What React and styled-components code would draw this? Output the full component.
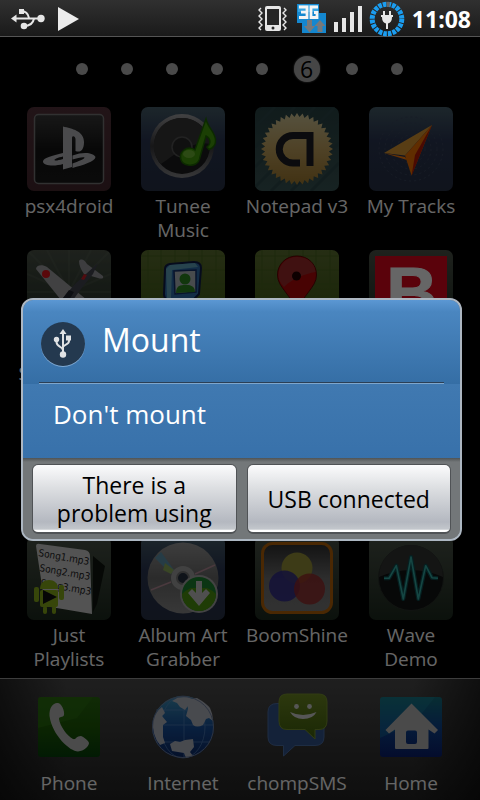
import React from "react";
import styled, {createGlobalStyle} from "styled-components";

const GlobalStyle = createGlobalStyle`
  * {
    box-sizing: border-box;
  }

  body {
    margin: 0;
    background: #000;
    font-family: "Open Sans", "Noto Sans", sans-serif;
  }
`;

/* ---------- status bar icons ---------- */

function UsbStatusIcon() {
  return (
    <svg width="34" height="24" viewBox="0 0 34 24" aria-label="USB connected">
      <g fill="none" stroke="#e6e6e6" strokeWidth="2">
        <path d="M3 11.500H30" />
        <path d="M10 4C14 4 17 6 18 11" />
        <path d="M13 19C19 19 22 17 23 11.500" />
      </g>
      <g fill="#e6e6e6">
        <path d="M0 11.500l5.500-4v8z" />
        <rect x="8" y="2" width="5" height="5" />
        <circle cx="13" cy="19" r="3.300" />
        <circle cx="30" cy="11.500" r="3.700" />
      </g>
    </svg>
  );
}

function PlayIcon() {
  return (
    <svg width="22" height="26" viewBox="0 0 22 26" aria-label="Playing">
      <path d="M0 1v24l21-12z" fill="#ececec" />
    </svg>
  );
}

function VibrateIcon() {
  return (
    <svg width="32" height="28" viewBox="0 0 32 28" aria-label="Vibrate">
      <rect x="7" y="1" width="16" height="25" rx="2" fill="#e6e6e6" />
      <rect x="9" y="4" width="12" height="16" fill="#262626" />
      <circle cx="15" cy="23" r="1.500" fill="#262626" />
      <g fill="none" stroke="#e6e6e6" strokeWidth="1.400">
        <path d="M3 3l-2 2 3 3-3 3 3 3-3 3 3 3-3 3 2 2" />
        <path d="M26 3l2 2-3 3 3 3-3 3 3 3-3 3 3 3-2 2" />
      </g>
    </svg>
  );
}

function ThreeGIcon() {
  return (
    <svg width="30" height="30" viewBox="0 0 30 30" aria-label="3G">
      <path d="M0 0h22v9h7v20H5v-10H0z" fill="#1487cf" />
      <path d="M1 1h20v7H1z" fill="#36a4e2" />
      <path
        d="M2 3h8v10.500H2M4 8.200h5M21 3h-7v10.500H20v-5H17"
        fill="none"
        stroke="#f4f4f4"
        strokeWidth="2.800"
      />
      <path d="M10 16h5v6h3l-5.500 6.500L7 22h3z" fill="#77797b" />
      <path d="M20.500 28h5v-6h3L23 16l-5.500 6h3z" fill="#77797b" />
    </svg>
  );
}

function SignalIcon() {
  return (
    <svg width="28" height="28" viewBox="0 0 28 28" aria-label="Signal full">
      <g fill="#e6e6e6">
        <rect x="0" y="17" width="4" height="10" />
        <rect x="8" y="13" width="4" height="14" />
        <rect x="16" y="7" width="4" height="20" />
        <rect x="24" y="1" width="4" height="26" />
      </g>
    </svg>
  );
}

function BatteryIcon() {
  return (
    <svg width="36" height="36" viewBox="0 0 36 36" aria-label="Charging">
      <circle
        cx="18"
        cy="18"
        r="14.800"
        fill="none"
        stroke="#1b9df0"
        strokeWidth="5"
        strokeDasharray="3.650 1"
      />
      <path d="M17.500 1h3.500l-.500 5h-2.500z" fill="#666" />
      <g fill="#e8e8e8">
        <rect x="14" y="10" width="2" height="5" />
        <rect x="20" y="10" width="2" height="5" />
        <path d="M12 14h12v2h-1c0 4-1.500 6-4 6.500V28h-2v-5.500c-2.500-.500-4-2.500-4-6.500H12z" />
      </g>
    </svg>
  );
}

/* ---------- app icons ---------- */

function PsxArt() {
  return (
    <>
      <rect x="7.500" y="7.500" width="69" height="69" rx="4" fill="url(#panel)" stroke="#7a7a7a" strokeWidth="1.500" />
      <path
        d="M36 46C25 49 16 51 16 54.500C16 59 28 59.500 36 57V52C31 53.500 28 54 27.500 53C27.500 52 31 50.500 36 49.500zM45.500 48.500C57 44 67 46 68.500 50C68 54.500 56 58 45.500 61V56.500C51 54.500 58 52 57.500 50.500C56 49.500 50 51.500 45.500 52.500z"
        fill="#b9babf"
      />
      <path
        d="M36 19.500C45 21.500 57 24 57 35C57 43 53.500 46 48.500 44V32C48.500 29 45 28 45 31V60L36 62.500z"
        fill="#b9babf"
      />
    </>
  );
}

function TuneeArt() {
  return (
    <>
      <circle cx="41" cy="39" r="32" fill="url(#metal)" />
      <circle cx="41" cy="39" r="28" fill="#1c1c1e" />
      <path d="M13 36C15 20 27 11 41 11s26 10 28 26C52 32 30 50 20 57C15 52 12 44 13 36z" fill="#383838" />
      <circle cx="41" cy="40" r="10" fill="#2a2a2a" stroke="#555" strokeWidth="1.500" />
      <path
        d="M65 12C67 21 74 25 74.500 33C75 38 72 41 68 42.500L66 40C71 36 69 31 65 29L59 50C58 57 52 59 47 58C39 57 37 48 43 43C47 40 52 41 54 43z"
        fill="#459d0c"
        stroke="#1f6a00"
        strokeWidth="1.500"
      />
      <ellipse cx="48" cy="47" rx="6" ry="4" fill="#6fb834" />
    </>
  );
}

const gearPoints = Array.from({length: 80}, (_, i) => {
  const radius = i % 2 ? 32 : 36;
  const angle = (i * Math.PI) / 40;
  return `${(42 + radius * Math.cos(angle)).toFixed(1)},${(42 + radius * Math.sin(angle)).toFixed(1)}`;
}).join(" ");

function NotepadArt() {
  return (
    <>
      <path d="M0 20L20 0M0 40L40 0M0 60L60 0M0 80L80 0M16 84L84 16M36 84L84 36M56 84L84 56" stroke="#2e4a4c" strokeWidth="3" />
      <polygon points={gearPoints} fill="url(#gold)" />
      <path d="M55 59V28.500H38a13.700 13.700 0 0 0 0 27.500h7" fill="none" stroke="#1c1d24" strokeWidth="7" />
    </>
  );
}

function TracksArt() {
  return (
    <>
      <g fill="none" stroke="#3c4860" strokeWidth="1" strokeDasharray="2 3">
        <circle cx="42" cy="42" r="14" />
        <circle cx="42" cy="42" r="20" />
        <circle cx="42" cy="42" r="26" />
        <circle cx="42" cy="42" r="32" />
      </g>
      <path d="M63 18L15 46l21 2.500z" fill="#dd9a34" />
      <path d="M15 46l21 4 2 3z" fill="#ff7d0a" />
      <path d="M63 18L36 48.500l6.500 20z" fill="#f07000" />
      <path d="M63 18L46 48l-3.500 21z" fill="#b81a06" />
    </>
  );
}

function PlaneArt() {
  return (
    <>
      <g stroke="#6b7567" strokeWidth="2" opacity=".2">
        <path d="M42 42L0 0M42 42L20 0M42 42V0M42 42L64 0M42 42L84 0M42 42L84 24M42 42L0 24M42 42H84M42 42H0" />
      </g>
      <path d="M9 19C9 15 15 14 20 17L60 50H34z" fill="#a2a2a6" />
      <path d="M52 11C54 8 58 10 60 14L76 26C77 29 74 29 71 28L57 24C54 20 52 15 52 11z" fill="#9a9a9f" />
      <path d="M36 48L48 34L71 13L66 24L54 39L46 50z" fill="#444752" />
      <path d="M36 48L42 40L47 42L42 50z" fill="#20242e" />
      <circle cx="19" cy="24" r="4" fill="#e0141c" />
      <path d="M57 24l3 1-3 5-3-1z" fill="#c9202a" />
    </>
  );
}

function GridLines() {
  return (
    <path
      d="M7 0V84M20 0V84M34 0V84M48 0V84M61 0V84M75 0V84M0 6H84M0 20H84M0 34H84M0 48H84"
      stroke="#4a6620"
      strokeWidth="1"
    />
  );
}

function ContactArt() {
  return (
    <>
      <GridLines />
      <path
        d="M24 19Q24 15 29 14L53 12Q60 12 60 18L58 44L52 50H26Q23 48 23 44z"
        fill="#2f6fae"
        stroke="#101c48"
        strokeWidth="2"
      />
      <path d="M25 19L29 15L54 13L57 17L31 20L30 48H26z" fill="#62a8c0" />
      <path d="M33 21L55 20V42L34 44z" fill="#b4bcc0" stroke="#16316c" strokeWidth="1.500" />
      <circle cx="44" cy="29" r="5.500" fill="#2d8a22" />
      <path d="M35 43C35 35 40 35 44 35s10 0 10 7z" fill="#2d8a22" />
    </>
  );
}

function PinArt() {
  return (
    <>
      <GridLines />
      <path d="M42 6C53 6 61.500 14 61.500 25C61.500 38 47 44 42 64C37 44 22.500 38 22.500 25C22.500 14 31 6 42 6z" fill="#b40808" stroke="#5c0505" />
      <path d="M42 7C52 7 60 13 60.500 22C50 24 38 28 29 37C25 33 23.500 29 23.500 25C23.500 15 31 7 42 7z" fill="#a02c2c" />
      <circle cx="41.500" cy="26" r="4.500" fill="#200" />
    </>
  );
}

function BArt() {
  return (
    <>
      <rect x="6" y="6" width="72" height="72" fill="#e0061c" />
      <BigLetter x="43" y="67" textAnchor="middle">
        B
      </BigLetter>
    </>
  );
}

function PlaylistArt() {
  return (
    <>
      <path d="M66 20L78 30L70 68L66 76z" fill="#0f160f" />
      <path d="M9 10Q9 7 13 8L58 14Q63 15 63 20L65 78L18 70z" fill="#cfcfcf" />
      <SongText x="11" y="20" transform="rotate(10 11 20)">
        Song1.mp3
      </SongText>
      <SongText x="12" y="35" transform="rotate(10 12 35)">
        Song2.mp3
      </SongText>
      <SongText x="13" y="50" transform="rotate(10 13 50)">
        Song3.mp3
      </SongText>
      <g fill="#8bae1a">
        <path d="M13 53C13 47 17 44 22 44s9 3 9 9z" />
        <rect x="13" y="54" width="18" height="17" rx="2" />
        <rect x="7" y="51" width="5" height="15" rx="2" />
        <rect x="32" y="49" width="5" height="15" rx="2" />
        <rect x="16" y="70" width="4" height="8" rx="2" />
        <rect x="25" y="70" width="4" height="8" rx="2" />
      </g>
      <path d="M16 54v14l14-7z" fill="#111" />
    </>
  );
}

function AlbumArt() {
  return (
    <>
      <circle cx="42" cy="42" r="35.500" fill="url(#disc)" />
      <path d="M14 22L20 16L33 34L30 38z" fill="#5f97b0" />
      <path d="M24 27L33 34L30 38L22 34z" fill="#8fae5c" />
      <path d="M10 54L30 46M54 38L74 29" stroke="#b98f9b" strokeWidth="1.500" />
      <circle cx="42" cy="42" r="12" fill="#a3a3a3" />
      <circle cx="42" cy="42" r="6" fill="#26303f" stroke="#777" strokeWidth="2" />
      <circle cx="58" cy="58" r="19" fill="#a8a8a8" />
      <circle cx="58" cy="58" r="17" fill="#1d8531" />
      <path d="M41 58a17 17 0 0 0 34 0q-4-4-9-6H50q-5 2-9 6z" fill="#4f970f" />
      <path d="M55 45h6v12l4-4 4 4-11 13-11-13 4-4 4 4z" fill="#c6c6c6" />
    </>
  );
}

function BoomArt() {
  return (
    <>
      <rect x="7.500" y="7.500" width="69" height="69" rx="10" fill="url(#boom)" stroke="#b86408" strokeWidth="3" />
      <circle cx="42" cy="32" r="15.500" fill="#98933a" />
      <circle cx="29.500" cy="50" r="15.500" fill="#302a8c" fillOpacity=".85" />
      <circle cx="54.500" cy="53" r="15.500" fill="#982828" fillOpacity=".8" />
    </>
  );
}

function WaveArt() {
  return (
    <>
      <circle cx="42" cy="42" r="32.500" fill="#131414" stroke="#2b322c" />
      <path d="M10 41a32 32 0 0 1 64 0q-32-14-64 0z" fill="#333534" />
      <path
        d="M15 42.300H20L27.300 29.700L34.300 63L42 21L49.300 63L56.700 29.700L63 41.700L69 42.300"
        fill="none"
        stroke="#0e4f52"
        strokeWidth="4"
        strokeLinejoin="round"
      />
      <path
        d="M15 42.300H20L27.300 29.700L34.300 63L42 21L49.300 63L56.700 29.700L63 41.700L69 42.300"
        fill="none"
        stroke="#35b0a8"
        strokeWidth="1.600"
        strokeLinejoin="round"
      />
    </>
  );
}

/* ---------- dock icons ---------- */

function PhoneArt() {
  return (
    <>
      <rect x="1" y="3" width="62" height="60" rx="3" fill="url(#phone)" />
      <path d="M1 6Q1 3 4 3H56L40 24L1 34z" fill="#2f7a12" fillOpacity=".5" />
      <path
        d="M20 9C24 8 28 17 27 21C26 24 22 22 22 25C23 32 30 42 36 45C39 46 39 42 44 42C47 43 52 47 52 49C52 52 47 57 41 57.500C33 57.500 15 41 12.500 22C12 14 16 9 20 9z"
        fill="#bcbcbc"
      />
    </>
  );
}

function GlobeArt() {
  return (
    <>
      <circle cx="32" cy="33" r="31" fill="url(#globe)" />
      <g fill="none" stroke="#5f8cc4" strokeWidth="1" opacity=".6">
        <path d="M33 2V64M1 31H63M5 48H59M5 16H59" />
        <ellipse cx="32" cy="33" rx="22" ry="31" />
      </g>
      <g fill="#b4b8c4">
        <path d="M36 8L40 5L46 4Q55 9 59 14Q62 20 62 27L58 24L55 25L52 31Q46 34 42 31L40 26L35 22L37 15z" />
        <path d="M21 7L27 3.500L36 3L44 6L41 9L41 13L37 12L34 16L29 13L26 9z" />
        <path d="M2 26Q5 17 11 13L14 19L11 22L16 28L12 31L12 43L14 49L9 51Q1 42 2 26z" />
        <path d="M19 50L24 47L29 48L34 46L42 45L43 53L39 58L42 62L35 64L33 59L21 57z" />
      </g>
      <circle cx="32" cy="33" r="30.500" fill="none" stroke="#7080a0" strokeWidth="1" />
    </>
  );
}

function ChompArt() {
  return (
    <>
      <path
        d="M12 9.500H50Q59 9.500 59 18V43Q59 51.500 50 51.500H30L18.500 62V51.500H12Q3 51.500 3 43V18Q3 9.500 12 9.500z"
        fill="#34558f"
        stroke="#4d70a8"
      />
      <path
        d="M22 0H54Q62 0 62 8V27Q62 35.500 54 35.500H50V45L40 35.500H22Q14 35.500 14 27V8Q14 0 22 0z"
        fill="url(#chomp)"
        stroke="#7a9630"
      />
      <circle cx="31.500" cy="12.500" r="2.400" fill="#d8d8d8" />
      <circle cx="44.500" cy="12.500" r="2.400" fill="#d8d8d8" />
      <path d="M25 18Q38 24 51.500 18Q48 25 38 25Q29 25 25 18z" fill="#d8d8d8" />
    </>
  );
}

function HomeArt() {
  return (
    <>
      <rect x="1" y="3" width="62" height="60" rx="3" fill="url(#home)" />
      <path d="M1 6Q1 3 4 3H56L36 28L1 44z" fill="#2295a8" fillOpacity=".3" />
      <path
        fillRule="evenodd"
        d="M32.500 9.500L59 36L55.500 39.500L49.500 35.500V54Q49.500 55 48.500 55H17Q16 55 16 54V35.500L10 39.500L6.500 36zM29 36.500Q27 36.500 27 38.500V48Q27 50 29 50H36Q38 50 38 48V38.500Q38 36.500 36 36.500z"
        fill="#b8b8b8"
      />
    </>
  );
}

function Gradient({id, stops}) {
  return (
    <linearGradient id={id} x1="0" y1="0" x2="0" y2="1">
      {stops.map((color, i) => (
        <stop key={color} offset={i / (stops.length - 1)} stopColor={color} />
      ))}
    </linearGradient>
  );
}

function SharedGradients() {
  return (
    <Defs width="0" height="0" aria-hidden="true">
      <defs>
        <Gradient id="panel" stops={["#3c3c3c", "#151515", "#1a1a1a"]} />
        <Gradient id="metal" stops={["#a5a5a8", "#3a3a3d", "#8a8a8d"]} />
        <Gradient id="gold" stops={["#d6cb9c", "#c5a560", "#a37c30"]} />
        <Gradient id="disc" stops={["#9a9a9a", "#6c6c6c", "#8c8c8c"]} />
        <Gradient id="boom" stops={["#303030", "#707070", "#7d7d7d"]} />
        <Gradient id="phone" stops={["#2a6b10", "#1d5c06", "#06430a"]} />
        <Gradient id="globe" stops={["#3f95bb", "#17509c", "#0d2a68"]} />
        <Gradient id="chomp" stops={["#708c24", "#43640c"]} />
        <Gradient id="home" stops={["#14717e", "#0d4591", "#0c2070"]} />
      </defs>
    </Defs>
  );
}

/* ---------- data ---------- */

const maroon = "#55343c, #47282f";
const navy = "#48606c, #2c3855 40%, #283248";
const teal = "#2a4546, #3a5656";
const forest = "#4c554a, #1e2c20";
const grass = "#5f7332, #38560c";

const apps = [
  {id: "psx", name: "psx4droid", Art: PsxArt, tile: maroon},
  {id: "tunee", name: "Tunee Music", Art: TuneeArt, tile: navy},
  {id: "notepad", name: "Notepad v3", Art: NotepadArt, tile: teal},
  {id: "tracks", name: "My Tracks", Art: TracksArt, tile: navy},
  {id: "plane", name: "Air Shootdown", Art: PlaneArt, tile: forest},
  {id: "contacts", Art: ContactArt, tile: grass},
  {id: "places", Art: PinArt, tile: grass},
  {id: "b", Art: BArt, tile: forest},
  {id: "playlists", name: "Just Playlists", Art: PlaylistArt, tile: forest, row: 4},
  {id: "album", name: "Album Art Grabber", Art: AlbumArt, tile: navy, row: 4},
  {id: "boom", name: "BoomShine", Art: BoomArt, tile: forest, row: 4},
  {id: "wave", name: "Wave Demo", Art: WaveArt, tile: forest, row: 4},
];

const dock = [
  {name: "Phone", Art: PhoneArt},
  {name: "Internet", Art: GlobeArt},
  {name: "chompSMS", Art: ChompArt},
  {name: "Home", Art: HomeArt},
];

const pages = [1, 2, 3, 4, 5, 6, 7, 8];
const currentPage = 6;

function App() {
  return (
    <Screen>
      <GlobalStyle />
      <SharedGradients />
      <StatusBar>
        <Notifications>
          <UsbStatusIcon />
          <PlayIcon />
        </Notifications>
        <SystemIcons>
          <VibrateIcon />
          <ThreeGIcon />
          <SignalIcon />
          <BatteryIcon />
          <Clock>11:08</Clock>
        </SystemIcons>
      </StatusBar>

      <Launcher>
        <Pager>
          {pages.map((page) => (
            <PageSlot key={page}>
              {page === currentPage ? <PageNumber>{page}</PageNumber> : <Dot />}
            </PageSlot>
          ))}
        </Pager>
        <AppGrid>
          {apps.map(({id, name, Art, tile, row}) => (
            <AppLink href="#" key={id} aria-label={name || id} $row={row}>
              <Tile $colors={tile}>
                <svg width="84" height="84" viewBox="0 0 84 84" aria-hidden="true">
                  <Art />
                </svg>
              </Tile>
              {name && <AppName>{name}</AppName>}
            </AppLink>
          ))}
        </AppGrid>
        <Dock>
          {dock.map(({name, Art}) => (
            <DockLink href="#" key={name}>
              <DockSvg width="64" height="64" viewBox="0 0 64 64" aria-hidden="true">
                <Art />
              </DockSvg>
              <AppName>{name}</AppName>
            </DockLink>
          ))}
        </Dock>

        <Scrim>
          <Dialog role="dialog" aria-labelledby="dialog-title">
            <DialogHeader>
              <UsbBadge>
                <svg width="20" height="30" viewBox="0 0 20 30" aria-hidden="true">
                  <g fill="none" stroke="#e0e2e4" strokeWidth="2">
                    <path d="M10 4V25" />
                    <path d="M3.500 10V13C3.500 18 9 17 10 21M16 8V12C16 16 11 15 10 18" />
                  </g>
                  <g fill="#e0e2e4">
                    <path d="M10 0l3.500 5h-7z" />
                    <circle cx="3.500" cy="10.500" r="2.700" />
                    <rect x="13" y="6.500" width="5" height="5" />
                    <circle cx="10" cy="25.500" r="3.200" />
                  </g>
                </svg>
              </UsbBadge>
              <Title id="dialog-title">Mount</Title>
            </DialogHeader>
            <Divider />
            <ListItem type="button">Don't mount</ListItem>
            <DialogFooter>
              <DialogButton type="button">There is a problem using</DialogButton>
              <DialogButton type="button">USB connected</DialogButton>
            </DialogFooter>
          </Dialog>
        </Scrim>
      </Launcher>
    </Screen>
  );
}

export default App;

const Screen = styled.div`
  min-height: 100vh;
  display: flex;
  flex-direction: column;
  background: #000;
`;

const Defs = styled.svg`
  position: absolute;
`;

const StatusBar = styled.header`
  height: 37px;
  display: flex;
  justify-content: space-between;
  align-items: center;
  padding: 2px 9px 0 11px;
  background: linear-gradient(#303030, #1a1a1a);
  border-bottom: 1px solid #555;
`;

const Notifications = styled.div`
  display: flex;
  align-items: center;
  gap: 13px;
`;

const SystemIcons = styled.div`
  display: flex;
  align-items: center;
  gap: 7px;
`;

const Clock = styled.time`
  color: #fff;
  font-size: 23px;
  line-height: 32px;
  font-weight: 700;
`;

const Launcher = styled.main`
  position: relative;
  flex: 1;
  display: flex;
  flex-direction: column;
`;

const Pager = styled.div`
  height: 70px;
  padding: 0 2px 6px 0;
  display: flex;
  justify-content: center;
  align-items: center;
`;

const PageSlot = styled.div`
  width: 45px;
  display: flex;
  justify-content: center;
`;

const Dot = styled.span`
  width: 12px;
  height: 12px;
  border-radius: 50%;
  background: #b8b8b8;
`;

const PageNumber = styled.span`
  width: 26px;
  height: 26px;
  border-radius: 50%;
  background: #b0b0b0;
  box-shadow: 0 0 2px #999;
  color: #000;
  font-size: 23px;
  line-height: 26px;
  text-align: center;
`;

const AppGrid = styled.div`
  display: grid;
  grid-template-columns: repeat(4, minmax(0, 1fr));
  grid-template-rows: repeat(4, 135px);
  row-gap: 8px;
  padding: 0 12px;
`;

const AppLink = styled.a`
  grid-row: ${(props) => props.$row || "auto"};
  display: flex;
  flex-direction: column;
  align-items: center;
  gap: 3px;
  color: #fff;
  text-decoration: none;
`;

const Tile = styled.span`
  width: 84px;
  height: 84px;
  border-radius: 7px;
  overflow: hidden;
  background: linear-gradient(${(props) => props.$colors});

  svg {
    display: block;
  }
`;

const AppName = styled.span`
  max-width: 105px;
  font-size: 19px;
  line-height: 24px;
  text-align: center;
`;

const Dock = styled.nav`
  margin-top: auto;
  height: 122px;
  display: grid;
  grid-template-columns: repeat(4, minmax(0, 1fr));
  padding: 15px 12px 0;
  border-top: 1px solid #999;
  background: linear-gradient(90deg, rgba(0, 0, 0, 0.5), transparent 14%, transparent 86%, rgba(0, 0, 0, 0.5)),
    linear-gradient(#4e4e4e, #242424);
`;

const DockLink = styled(AppLink)`
  gap: 13px;
`;

const DockSvg = styled.svg`
  overflow: visible;
`;

const BigLetter = styled.text`
  font: 700 71px "Liberation Sans", sans-serif;
  fill: #fff;
  stroke: #fff;
  stroke-width: 1px;
`;

const SongText = styled.text`
  font: 10px "DejaVu Sans Condensed", "DejaVu Sans", sans-serif;
  fill: #222;
`;

const Scrim = styled.div`
  position: absolute;
  inset: 0;
  display: flex;
  align-items: center;
  padding: 2px 18px 0 21px;
  background: rgba(0, 0, 0, 0.6);
`;

const Dialog = styled.section`
  flex: 1;
  border: 2px solid #adb7c2;
  border-radius: 12px;
  overflow: hidden;
  background: #737779;
`;

const DialogHeader = styled.header`
  height: 84px;
  display: flex;
  align-items: center;
  gap: 17px;
  padding: 4px 18px 0;
  background: linear-gradient(#5b97d3, #4a86c0 14%, #356ea5);
`;

const UsbBadge = styled.span`
  width: 44px;
  height: 44px;
  border-radius: 50%;
  display: flex;
  align-items: center;
  justify-content: center;
  background: #24394f;
  box-shadow: 0 1px 0 #7fa9d3;
`;

const Title = styled.h1`
  margin: 0;
  padding-bottom: 8px;
  color: #fff;
  font-size: 32px;
  line-height: 40px;
  font-weight: 400;
`;

const Divider = styled.hr`
  height: 2px;
  margin: -2px 16px 0;
  border: 0;
  background: linear-gradient(#2b3f55 50%, #7ea6cc 50%);
`;

const ListItem = styled.button`
  display: block;
  width: 100%;
  height: 74px;
  padding: 0 30px 14px;
  border: 0;
  background: linear-gradient(#4079b1, #3871aa);
  color: #fff;
  font: 400 26px/36px "Open Sans", "Noto Sans", sans-serif;
  text-align: left;
`;

const DialogFooter = styled.footer`
  display: grid;
  grid-template-columns: repeat(2, minmax(0, 1fr));
  column-gap: 10px;
  padding: 6px 9px 5px;
  background: linear-gradient(#4f5354, #737779 4px);
`;

const DialogButton = styled.button`
  height: 70px;
  padding: 1px 12px 0;
  border: 1px solid #505356;
  border-bottom-width: 2px;
  border-radius: 6px;
  background: linear-gradient(#fbfbfc, #dcdee1 35%, #b4b8c0 85%, #c3c7cc 96%, #fff 97%);
  color: #000;
  font: 400 23px/28px "Open Sans", "Noto Sans", sans-serif;
`;
